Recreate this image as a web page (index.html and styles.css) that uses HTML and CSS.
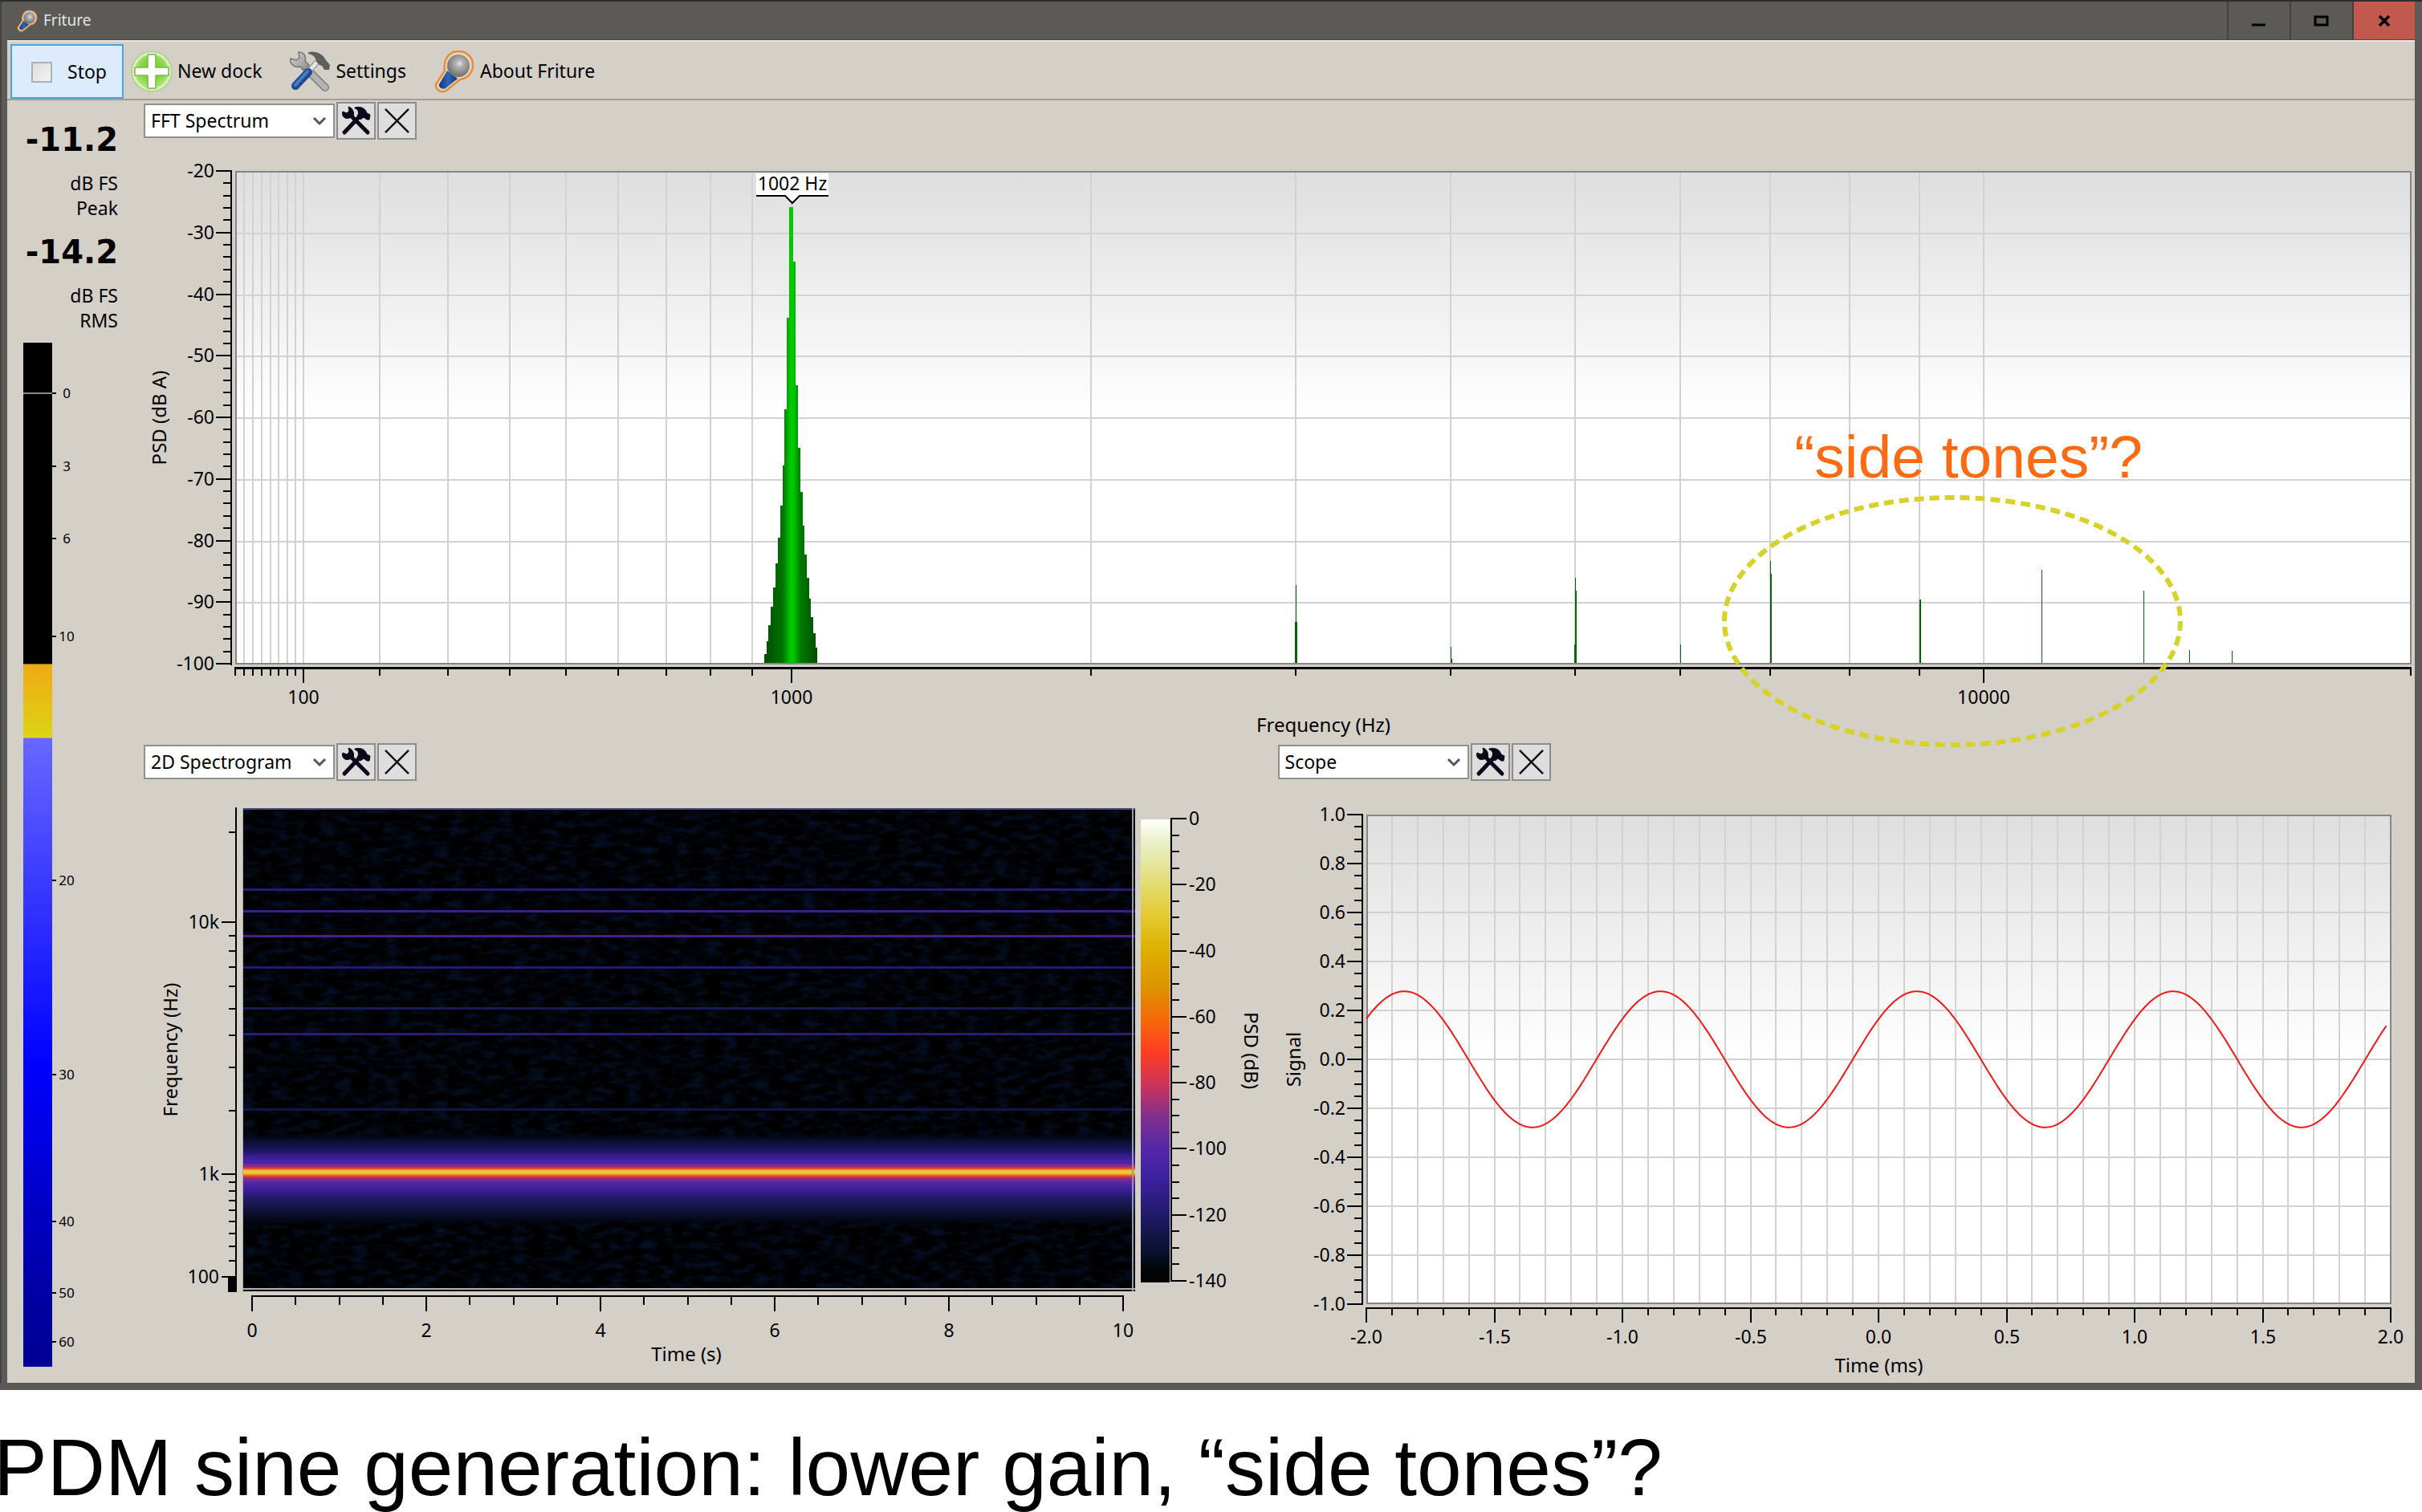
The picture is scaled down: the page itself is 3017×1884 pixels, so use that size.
FILE: index.html
```html
<!DOCTYPE html>
<html lang="en">
<head>
<meta charset="utf-8">
<title>Friture</title>
<link rel="stylesheet" href="styles.css">
</head>
<body>
<svg class="defs" aria-hidden="true">
  <defs>
    <linearGradient id="barrel" x1="0" y1="0" x2="1" y2="0"><stop offset="0" stop-color="#143a78"/><stop offset=".5" stop-color="#2f66b8"/><stop offset="1" stop-color="#12326a"/></linearGradient>
    <radialGradient id="ball" cx=".55" cy=".4" r=".6"><stop offset="0" stop-color="#e8e8e8"/><stop offset=".25" stop-color="#b4b4b4"/><stop offset="1" stop-color="#6e6e6e"/></radialGradient>
    <radialGradient id="lime" cx=".5" cy=".45" r=".5"><stop offset="0" stop-color="#6cc81e"/><stop offset=".6" stop-color="#7fd63a"/><stop offset="1" stop-color="#a6e070"/></radialGradient>
    <linearGradient id="steel" x1="0" y1="0" x2="1" y2="1"><stop offset="0" stop-color="#d8d8d8"/><stop offset="1" stop-color="#8c8c8c"/></linearGradient>
    <symbol id="mic" viewBox="0 0 50 54">
      <path d="M30 2C40 2 48 9 48 19C48 29 41 36 32 37L16 50C11 55 1 51 2 43L13 26C11 12 18 2 30 2Z" fill="#dcd6cc" stroke="#f08a2c" stroke-width="2.4"/>
      <path d="M16 26L29 36L14 48C10 50 5 47 6 43Z" fill="url(#barrel)"/>
      <circle cx="30" cy="20" r="14" fill="url(#ball)"/>
    </symbol>
    <symbol id="plus" viewBox="0 0 52 54">
      <circle cx="26" cy="27" r="25" fill="#dcedc4" stroke="#b4d492" stroke-width="2"/>
      <circle cx="26" cy="27" r="21" fill="url(#lime)"/>
      <path d="M21 6H31V22H47V32H31V48H21V32H5V22H21Z" fill="#fff" stroke="#7cb84e" stroke-width="1.5"/>
    </symbol>
    <symbol id="tools-color" viewBox="0 0 52 52">
      <path d="M20 21L45 46" stroke="#7c7c7c" stroke-width="10" stroke-linecap="round"/>
      <path d="M20 21L45 46" stroke="#b4b4b4" stroke-width="7" stroke-linecap="round"/>
      <path d="M12 2L13 9L9 12L2 10C1 17 7 22 14 20L19 24L25 18L20 13C22 7 18 2 12 2Z" fill="url(#steel)" stroke="#777" stroke-width="1.5"/>
      <path d="M24 27L35 14" stroke="#888" stroke-width="7"/>
      <path d="M24 27L35 14" stroke="#e4e4e4" stroke-width="5"/>
      <path d="M8 44L24 27" stroke="#1d4a92" stroke-width="10" stroke-linecap="round"/>
      <path d="M8 43L23 26" stroke="#4a7cc4" stroke-width="4" stroke-linecap="round"/>
      <path d="M24 2C34 0 42 4 46 12L51 18L50 24L44 24L41 19L38 18L34 14C33 8 30 5 24 4Z" fill="#5c5f5e"/>
    </symbol>
    <symbol id="tools" viewBox="0 0 37 37">
      <g fill="#0a0818" stroke="#0a0818">
        <path d="M12 12L33 33" stroke-width="5" stroke-linecap="round"/>
        <path d="M4 33L22 14" stroke-width="5" stroke-linecap="round"/>
        <path d="M9 1L10 6L7 9L2 7C0 13 5 17 10 15L15 14C17 8 14 2 9 1Z" stroke-width="1"/>
        <path d="M17 2C25 0 30 3 32 9L36 11L35 17L32 17L28 14L24 17L20 13C23 8 21 4 17 3Z" stroke-width="1"/>
      </g>
    </symbol>
    <symbol id="cross" viewBox="0 0 32 32"><path d="M1 1L31 31M31 1L1 31" stroke="#111" stroke-width="2.5" fill="none"/></symbol>
    <symbol id="chevron" viewBox="0 0 18 12"><path d="M2 2L9 9L16 2" stroke="#555" stroke-width="3" fill="none"/></symbol>
  </defs>
</svg>

<main class="window">
  <header class="titlebar">
    <svg class="title-icon"><use href="#mic"/></svg>
    <h1 class="title">Friture</h1>
    <div class="window-buttons">
      <button class="win-button" aria-label="Minimize"><svg viewBox="0 0 20 16"><path d="M1 13H18" stroke="#000" stroke-width="3"/></svg></button>
      <button class="win-button" aria-label="Maximize"><svg viewBox="0 0 20 16"><rect x="2" y="3" width="15" height="10" fill="none" stroke="#000" stroke-width="3"/></svg></button>
      <button class="win-button win-close" aria-label="Close"><svg viewBox="0 0 20 16"><path d="M4 2L16 14M16 2L4 14" stroke="#000" stroke-width="3.5"/></svg></button>
    </div>
  </header>

  <nav class="toolbar">
    <button class="tool tool-active"><span class="stop-icon"></span>Stop</button>
    <button class="tool"><svg class="tool-icon"><use href="#plus"/></svg>New dock</button>
    <button class="tool tool-wide"><svg class="tool-icon"><use href="#tools-color"/></svg>Settings</button>
    <button class="tool tool-wide"><svg class="tool-icon"><use href="#mic"/></svg>About Friture</button>
  </nav>

  <div class="workspace">
    <aside class="levels">
      <p class="level-value">-11.2</p>
      <p class="level-unit">dB FS<br>Peak</p>
      <p class="level-value">-14.2</p>
      <p class="level-unit">dB FS<br>RMS</p>
      <svg class="chart meter" id="meter"></svg>
    </aside>

    <div class="docks">
      <section class="dock dock-full">
        <div class="dock-bar">
          <span class="combo"><select class="combo-select" aria-label="Top dock widget"><option>FFT Spectrum</option></select><svg class="combo-arrow"><use href="#chevron"/></svg></span>
          <button class="dock-button" aria-label="Dock settings"><svg class="tools-glyph"><use href="#tools"/></svg></button>
          <button class="dock-button" aria-label="Close dock"><svg class="cross-glyph"><use href="#cross"/></svg></button>
        </div>
        <div class="plot"><svg class="chart" id="fft"></svg></div>
      </section>
      <section class="dock">
        <div class="dock-bar">
          <span class="combo"><select class="combo-select" aria-label="Left dock widget"><option>2D Spectrogram</option></select><svg class="combo-arrow"><use href="#chevron"/></svg></span>
          <button class="dock-button" aria-label="Dock settings"><svg class="tools-glyph"><use href="#tools"/></svg></button>
          <button class="dock-button" aria-label="Close dock"><svg class="cross-glyph"><use href="#cross"/></svg></button>
        </div>
        <div class="plot"><svg class="chart" id="spectrogram"></svg></div>
      </section>
      <section class="dock">
        <div class="dock-bar">
          <span class="combo"><select class="combo-select" aria-label="Right dock widget"><option>Scope</option></select><svg class="combo-arrow"><use href="#chevron"/></svg></span>
          <button class="dock-button" aria-label="Dock settings"><svg class="tools-glyph"><use href="#tools"/></svg></button>
          <button class="dock-button" aria-label="Close dock"><svg class="cross-glyph"><use href="#cross"/></svg></button>
        </div>
        <div class="plot"><svg class="chart" id="scope"></svg></div>
      </section>
      <div class="annotation">
        <p class="annotation-text">“side tones”?</p>
        <svg class="annotation-ring" viewBox="0 0 574 314"><ellipse cx="287" cy="157" rx="284" ry="154" fill="none" stroke="#d6d229" stroke-width="6" stroke-dasharray="12 7"/></svg>
      </div>
    </div>
  </div>
</main>

<p class="caption">PDM sine generation: lower gain, “side tones”?</p>
<script src="charts.js"></script>
</body>
</html>
```
FILE: styles.css
```css
* { box-sizing: border-box; }

body {
  margin: 0;
  min-height: 100vh;
  display: flex;
  flex-direction: column;
  background: #fff;
  color: #000;
  font: 23px/31px "Noto Sans", "Open Sans", sans-serif;
  overflow-x: hidden;
}

h1, p { margin: 0; font-weight: normal; }
button, select { font: inherit; color: inherit; }
.defs { position: absolute; width: 0; height: 0; }

.window {
  flex: 1;
  display: flex;
  flex-direction: column;
  padding: 0 9px;
  background: #5b5a57;
  border-top: 2px solid #2e2c2d;
  border-bottom: 9px solid #5b5a57;
  box-shadow: inset 2px 0 #444241;
}

.titlebar {
  display: flex;
  align-items: center;
  height: 48px;
  padding-left: 12px;
  border-bottom: 1px solid #46494b;
}
.title-icon { width: 26px; height: 28px; }
.title { flex: 1; margin-left: 7px; font-size: 19px; color: #e4e4e4; }
.window-buttons { display: flex; align-self: stretch; }
.win-button {
  width: 78px;
  padding: 0;
  border: 0;
  border-left: 2px solid #444241;
  background: none;
  display: grid;
  place-items: center;
}
.win-button svg { width: 20px; height: 16px; }
.win-close { background: #c2594f; }

.toolbar {
  display: flex;
  align-items: center;
  height: 75px;
  padding: 2px 4px 0;
  gap: 7px;
  background: #d4d0c8;
  border-top: 2px solid #e8e6e1;
  border-bottom: 2px solid #a09d96;
}
.tool {
  display: flex;
  align-items: center;
  height: 68px;
  gap: 6px;
  padding: 0 2px;
  border: 0;
  background: none;
  white-space: nowrap;
}
.tool-wide { padding-left: 25px; }
.tool-active {
  width: 141px;
  gap: 19px;
  padding: 2px 0 0 24px;
  background: #dcebfd;
  border: 2px solid #4aa5dc;
}
.tool-icon { width: 52px; height: 54px; }
.stop-icon {
  width: 26px;
  height: 26px;
  border: 2px solid #a9b1b6;
  background: linear-gradient(135deg, #dcdcda, #f4f4f2);
}

.workspace {
  flex: 1;
  display: grid;
  grid-template-columns: 170px 1fr;
  background: #d4d0c8;
}
.levels { display: flex; flex-direction: column; padding: 24px 0 20px; }
.level-value {
  padding-right: 32px;
  text-align: right;
  font: bold 40px/50px "DejaVu Sans", sans-serif;
}
.level-unit { padding: 14px 32px 14px 0; text-align: right; }
.meter { flex: 1; min-height: 0; margin-top: -2px; font-size: 17px; }

.docks {
  position: relative;
  display: grid;
  grid-template-rows: 1fr 1fr;
  grid-template-columns: calc(50% - 2px) 1fr;
}
.dock { display: flex; flex-direction: column; min-width: 0; }
.dock-full { grid-column: 1 / -1; }
.dock-bar { display: flex; align-items: center; gap: 2px; padding-top: 2px; }
.combo { position: relative; width: 238px; height: 43px; }
.combo-select {
  width: 100%;
  height: 100%;
  padding: 0 7px;
  appearance: none;
  border: 2px solid #92908c;
  border-radius: 0;
  background: #fff;
}
.combo-arrow {
  position: absolute;
  right: 10px;
  top: 16px;
  width: 18px;
  height: 12px;
  pointer-events: none;
}
.dock-button {
  width: 49px;
  height: 47px;
  padding: 0;
  display: grid;
  place-items: center;
  border: 2px solid #8e8c8a;
  background: #dedede;
}
.tools-glyph { width: 37px; height: 37px; }
.cross-glyph { width: 31px; height: 31px; }

.plot { flex: 1; min-height: 0; position: relative; }
.chart { display: block; width: 100%; overflow: visible; }
.plot .chart { position: absolute; height: 100%; }
.axis-title { font-size: 24px; }

.annotation {
  position: absolute;
  left: 69.5%;
  top: 25%;
  width: 574px;
  text-align: center;
}
.annotation-text {
  padding: 0 0 4px 40px;
  font: 75px/88px "Liberation Sans", Arial, sans-serif;
  color: #ff6a13;
}
.annotation-ring { display: block; width: 100%; }

.caption {
  height: 152px;
  padding-top: 40px;
  margin-left: -8px;
  font: 100px/112px "Liberation Sans", Arial, sans-serif;
  white-space: nowrap;
}
```
FILE: charts.js
```js
const NS = "http://www.w3.org/2000/svg";

function el(parent, name, attrs, text) {
  const node = document.createElementNS(NS, name);
  for (const key in attrs) node.setAttribute(key, attrs[key]);
  if (text !== undefined) node.textContent = text;
  parent.appendChild(node);
  return node;
}
const box = (p, x, y, w, h, fill) => el(p, "rect", { x, y, width: w, height: h, fill });
function label(p, x, y, text, anchor, angle) {
  const a = { x, y: y + 8, "text-anchor": anchor || "middle" };
  if (angle) a.transform = `rotate(${angle} ${x} ${y})`;
  return el(p, "text", a, text);
}
function title(p, x, y, text, angle) {
  label(p, x, y, text, "middle", angle).setAttribute("class", "axis-title");
}
function gradient(p, id, vertical, stops) {
  const g = el(p, "linearGradient", vertical ? { id, x2: 0, y2: 1 } : { id });
  for (const [offset, color] of stops) el(g, "stop", { offset, "stop-color": color });
}

const mel = f => 2595 * Math.log10(1 + f / 700);
const logSteps = (from, to) => {
  const out = [];
  for (let d = 10; d <= 10000; d *= 10)
    for (let k = 1; k < 10; k++) if (k * d >= from && k * d <= to) out.push(k * d);
  return out;
};

function frame(svg, l, t, r, b) {
  const rect = box(svg, l + 1, t + 1, r - l - 2, b - t - 2, "none");
  rect.setAttribute("stroke", "#868686");
  rect.setAttribute("stroke-width", 2);
}

function drawFft(svg, w, h) {
  const l = 114, t = 39, r = w - 4, b = h - 96;
  const x = f => Math.round(l + (mel(f) - mel(20)) / (mel(20000) - mel(20)) * (r - l - 1)) - 1;
  const y = db => Math.round(t + (-20 - db) / 80 * (b - t - 1));
  gradient(svg, "paper", true, [[0, "#dedede"], [0.5, "#fff"]]);
  gradient(svg, "green", false, [[0, "#004d00"], [0.35, "#007400"], [0.5, "#00cc00"], [0.56, "#00c400"], [0.68, "#007a00"], [1, "#004d00"]]);
  box(svg, l, t, r - l, b - t, "url(#paper)");
  for (const f of logSteps(20, 19000)) box(svg, x(f), t, 2, b - t, "#d2d2d2");
  for (let db = -30; db > -100; db -= 10) box(svg, l, y(db), r - l, 2, "#d2d2d2");

  const left = [-43.9, -58.7, -67.8, -74.3, -79.6, -83.7, -87.6, -90.7, -93.7, -96.3, -98.5];
  const right = [-34.7, -54.8, -65, -72.1, -77.6, -82.3, -86.1, -89.4, -92.4, -95.1, -97.4];
  const bins = [...left.reverse(), -25.8, -25.8, ...right];
  const edge = k => x((k - 0.5) * 5.859) + 1;
  let d = `M${edge(159)} ${b - 2}`;
  bins.forEach((db, i) => { d += `V${y(db)}H${edge(160 + i)}`; });
  el(svg, "path", { d: d + `V${b - 2}Z`, fill: "url(#green)" });

  const spikes = [[3000, -87.2, 1], [3000, -93.2, 3], [4000, -97.3, 1], [4000, -99.2, 2],
    [5000, -86.1, 1], [5000, -88.1, 2], [5000, -96.9, 3], [6000, -96.9, 1], [7000, -83.3, 1],
    [7000, -85.4, 2], [9000, -89.6, 2], [11000, -84.8, 1], [13000, -88.1, 1], [14000, -97.8, 1], [15000, -97.9, 1]];
  for (const [f, db, width] of spikes)
    box(svg, x(f) + (width > 2 ? 0 : 1), y(db), width, b - 2 - y(db), "#0a640a");
  frame(svg, l, t, r, b);

  const cx = x(1002) + 1;
  box(svg, cx - 45, t + 3, 90, 29, "#fff");
  el(svg, "path", { d: `M${cx - 45} ${t + 31}h36l9 9l9 -9h36`, fill: "#fff", stroke: "#000", "stroke-width": 2 });
  label(svg, cx, t + 16, "1002 Hz");

  box(svg, l - 6, t - 1, 2, b - t + 2, "#000");
  for (let i = 0; i <= 40; i++) {
    const db = -20 - i * 2, len = i % 5 ? 10 : 19;
    box(svg, l - 5 - len, y(db) - 1, len, 2, "#000");
    if (i % 5 === 0) label(svg, l - 26, y(db), String(db), "end");
  }
  box(svg, l - 1, b + 3, r - l + 1, 3, "#000");
  for (const f of logSteps(20, 20000)) {
    const major = [100, 1000, 10000].includes(f);
    box(svg, x(f), b + 5, 2, major ? 18 : 9, "#000");
    if (major) label(svg, x(f) + 1, b + 41, String(f));
  }
  title(svg, (l + r) / 2, b + 76, "Frequency (Hz)");
  title(svg, l - 94, (t + b) / 2, "PSD (dB A)", -90);
}

function drawSpectrogram(svg, w, h) {
  const l = 123, t = 34, r = w - 178, b = h - 114;
  const y = f => Math.round(b - (mel(f) - mel(20)) / (mel(24000) - mel(20)) * (b - t));
  const iy = f => Math.round(b - 5 - (mel(f) - mel(20)) / (mel(24000) - mel(20)) * (b - t - 7));
  const noise = el(svg, "filter", { id: "noise", x: 0, y: 0, width: 1, height: 1, "color-interpolation-filters": "sRGB" });
  el(noise, "feTurbulence", { type: "fractalNoise", baseFrequency: "0.05 0.12", numOctaves: 2, seed: 4 });
  el(noise, "feColorMatrix", { values: "0 0 0 0 0.02  0 0 0 0 0.06  0 0 0 0 0.14  2.6 0 0 0 -1.1" });
  gradient(svg, "tone", true, [[0, "#03050c00"], [0.1, "#0c0f30"], [0.2, "#1a1660"], [0.27, "#3a1f98"],
    [0.33, "#4d22a8"], [0.37, "#9a3078"], [0.39, "#e8452a"], [0.405, "#f0a020"], [0.415, "#ecc83c"], [0.44, "#ecc83c"], [0.45, "#f0a020"],
    [0.47, "#e8452a"], [0.49, "#9a3078"], [0.53, "#5a28a5"], [0.61, "#3a1f98"], [0.7, "#221a68"], [0.82, "#10143c"], [0.92, "#060a1c"], [1, "#03050c00"]]);

  box(svg, l, t, r - l, b - t, "#000001");
  box(svg, l, t, r - l, b - t, "#000").setAttribute("filter", "url(#noise)");
  const lines = { 2000: "#12163f", 4000: "#2c1c74", 5000: "#17195a", 7000: "#211b6a", 9000: "#47208c", 11000: "#3c1f82", 13000: "#261b70" };
  for (const f in lines) box(svg, l, iy(+f) - 1, r - l, 3, lines[f]);
  box(svg, l, iy(1000) - 49, r - l, 118, "url(#tone)");
  box(svg, l, t, r - l, 2, "#4a4270");
  box(svg, l, t, 1, b - t, "#a8a5b0");
  box(svg, r - 4, t, 2, b - t, "#9a98a0");
  box(svg, l, b - 4, r - l, 2, "#b4b1ac");

  box(svg, l - 9, t - 1, 2, b - t + 2, "#000");
  for (const f of logSteps(20, 24000)) {
    const major = [100, 1000, 10000].includes(f), len = major ? 18 : 9;
    box(svg, l - 8 - len, y(f) - 1, len, 2, "#000");
    if (major) label(svg, l - 29, y(f), f >= 1000 ? f / 1000 + "k" : f, "end");
  }
  box(svg, l - 18, y(100), 11, b - y(100) + 1, "#000");
  title(svg, l - 89, (t + b) / 2, "Frequency (Hz)", -90);

  const x0 = l + 12, x1 = r - 15, x = s => Math.round(x0 + s * (x1 - x0) / 10);
  box(svg, x0 - 1, b + 5, x1 - x0 + 2, 2, "#000");
  for (let i = 0; i <= 20; i++) {
    const major = i % 4 === 0;
    box(svg, x(i / 2) - 1, b + 6, 2, major ? 19 : 11, "#000");
    if (major) label(svg, x(i / 2), b + 49, String(i / 2));
  }
  title(svg, (l + r) / 2 - 3, b + 79, "Time (s)");

  const ct = t + 13, cb = b - 13, v = db => Math.round(ct - db / 140 * (cb - ct));
  gradient(svg, "heat", true, [[0, "#fffffa"], [0.05, "#e9f0c8"], [0.14, "#e2dc70"], [0.2, "#e4cc38"], [0.28, "#dfb000"], [0.36, "#dc9400"],
    [0.43, "#f46a08"], [0.5, "#ff3e20"], [0.57, "#cf3458"], [0.64, "#83308c"], [0.71, "#5428a8"], [0.78, "#3a209c"], [0.86, "#1e1a66"],
    [0.93, "#0a1230"], [0.97, "#02060c"], [1, "#000"]]);
  box(svg, r + 7, ct + 1, 36, cb - ct + 1, "url(#heat)");
  box(svg, r + 44, ct - 1, 2, cb - ct + 2, "#000");
  for (let i = 0; i <= 28; i++) {
    const major = i % 4 === 0;
    box(svg, r + 45, v(-5 * i) - 1, major ? 19 : 10, 2, "#000");
    if (major) label(svg, r + 67, v(-5 * i), String(-5 * i), "start");
  }
  title(svg, r + 144, (t + b) / 2 + 1, "PSD (dB)", 90);
}

function drawScope(svg, w, h) {
  const l = 110, t = 42, r = w - 30, b = h - 98;
  const x = ms => Math.round(l + (ms + 2) / 4 * (r - l - 1));
  const y = v => Math.round(t + (1 - v) / 2 * (b - t));
  box(svg, l, t, r - l, b - t, "url(#paper)");
  for (let i = -19; i < 20; i++) box(svg, x(i / 10) - 1, t, 2, b - t, "#d2d2d2");
  for (let i = -4; i < 5; i++) box(svg, l, y(i / 5) - 1, r - l, 2, "#d2d2d2");
  frame(svg, l, t, r, b);
  let d = "";
  for (let ms = -2; ms <= 1.985; ms += 0.01) {
    const px = l + (ms + 2) / 4 * (r - l), py = (t + b) / 2 - 0.278 * Math.cos(2 * Math.PI * (ms - 0.148)) * (b - t) / 2;
    d += `${d ? "L" : "M"}${px.toFixed(1)} ${py.toFixed(1)}`;
  }
  el(svg, "path", { d, fill: "none", stroke: "#f01818", "stroke-width": 2 });

  box(svg, l - 6, t - 1, 2, b - t + 2, "#000");
  for (let i = -20; i <= 20; i++) {
    const len = i % 4 ? 10 : 19;
    box(svg, l - 5 - len, y(i / 20) - 1, len, 2, "#000");
    if (i % 4 === 0) label(svg, l - 26, y(i / 20), (i / 20).toFixed(1), "end");
  }
  box(svg, l - 1, b + 4, r - l + 1, 2, "#000");
  for (let i = -20; i <= 20; i++) {
    const major = i % 5 === 0;
    box(svg, x(i / 10) - 1, b + 5, 2, major ? 18 : 9, "#000");
    if (major) label(svg, x(i / 10), b + 41, (i / 10).toFixed(1));
  }
  title(svg, (l + r) / 2, b + 77, "Time (ms)");
  title(svg, l - 90, (t + b) / 2, "Signal", -90);
}

function drawMeter(svg, w, h) {
  const l = 20, bar = 36;
  gradient(svg, "peak", true, [[0, "#efaa14"], [1, "#ddd414"]]);
  gradient(svg, "rms", true, [[0, "#6868ff"], [0.52, "#0000ff"], [0.9, "#0000a0"], [1, "#000094"]]);
  const peak = 0.314 * h, rms = 0.386 * h;
  box(svg, l, 0, bar, peak, "#000");
  box(svg, l, peak, bar, rms - peak, "url(#peak)");
  box(svg, l, rms, bar, h - rms, "url(#rms)");
  const scale = { 0: 0.0494, 3: 0.1207, 6: 0.1912, 10: 0.287, 20: 0.525, 30: 0.7147, 40: 0.858, 50: 0.928, 60: 0.9757 };
  for (const db in scale) {
    const y = Math.round(scale[db] * h);
    box(svg, l + bar, y - 1, 5, 2, "#000");
    el(svg, "text", { x: l + 54, y: y + 6, "text-anchor": "middle" }, db);
  }
  box(svg, l, Math.round(scale[0] * h) - 1, bar, 2, "#8a8a8a");
}

const charts = { fft: drawFft, spectrogram: drawSpectrogram, scope: drawScope, meter: drawMeter };
function render() {
  for (const id in charts) {
    const svg = document.getElementById(id);
    svg.replaceChildren();
    const { width, height } = svg.getBoundingClientRect();
    charts[id](svg, Math.round(width), Math.round(height));
  }
}
render();
addEventListener("resize", render);
```
